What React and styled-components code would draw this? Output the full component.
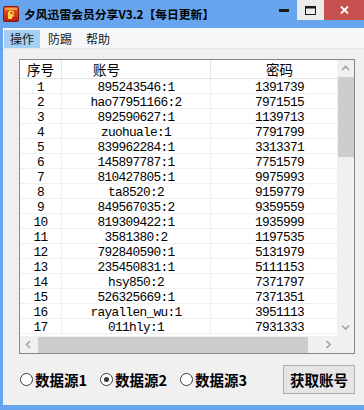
import React from "react";
import styled, { createGlobalStyle } from "styled-components";

const GlobalStyle = createGlobalStyle`
  html, body { margin: 0; padding: 0; background: #ffffff; }
  body { font-family: "Noto Sans CJK SC", "Noto Sans", sans-serif; }
  * { box-sizing: border-box; }
`;

const CJK = `"Noto Sans CJK SC", "Noto Sans", sans-serif`;
const MONO = `"Liberation Mono", "Noto Sans CJK SC", monospace`;

const Window = styled.div`
  width: 364px;
  height: 410px;
  background: #67a6ef;
  display: flex;
  flex-direction: column;
  overflow: hidden;
`;

const TitleBar = styled.div`
  height: 28px;
  flex-shrink: 0;
  display: flex;
  align-items: flex-start;
`;

const AppIcon = styled.svg`
  width: 16px;
  height: 16px;
  margin: 6px 0 0 3px;
  flex-shrink: 0;
`;

const TitleText = styled.div`
  flex: 1;
  margin: 5px 0 0 5px;
  font-family: ${CJK};
  font-weight: 700;
  font-size: 11.8px;
  line-height: 18px;
  color: #000;
  white-space: nowrap;
`;

const CaptionButton = styled.div`
  width: ${(p) => p.$w}px;
  height: 20px;
  background: ${(p) => p.$bg || "transparent"};
  display: flex;
  align-items: center;
  justify-content: center;
  flex-shrink: 0;
`;

const Body = styled.div`
  flex: 1;
  margin: 0 0 5px 3px;
  background: #f0f0f0;
  display: flex;
  flex-direction: column;
`;

const MenuBar = styled.div`
  height: 21px;
  flex-shrink: 0;
  background: #f5f6f7;
  border-bottom: 1px solid #e6e6e6;
  display: flex;
  align-items: flex-start;
  padding: 2px 0 0 1px;
  gap: 2px;
`;

const MenuItem = styled.div`
  width: 36px;
  height: 18px;
  font-family: ${CJK};
  font-size: 12px;
  line-height: 18px;
  text-align: center;
  color: #1a1a1a;
  background: ${(p) => (p.$active ? "#a6cff5" : "transparent")};
`;

const Content = styled.div`
  padding: 10px 9px 0 16px;
  flex-shrink: 0;
`;

const ListView = styled.div`
  width: 336px;
  height: 295px;
  border: 1px solid #828790;
  background: #ffffff;
  display: flex;
  flex-direction: column;
`;

const ListMain = styled.div`
  flex: 1;
  display: flex;
  min-height: 0;
`;

const Table = styled.div`
  flex: 1;
  overflow: hidden;
  min-width: 0;
`;

const HeaderRow = styled.div`
  display: flex;
  height: 19px;
  border-bottom: 1px solid #e5e5e5;
  width: max-content;
`;

const HeaderCell = styled.div`
  width: ${(p) => p.$w}px;
  flex-shrink: 0;
  border-right: 1px solid #e5e5e5;
  font-family: ${CJK};
  font-size: 13.5px;
  line-height: 18px;
  color: #000;
  text-align: ${(p) => (p.$indent ? "left" : "center")};
  padding-left: ${(p) => p.$indent || 0}px;
`;

const Row = styled.div`
  display: flex;
  height: 15px;
  border-bottom: 1px solid #f0f0f0;
  width: max-content;
`;

const Cell = styled.div`
  width: ${(p) => p.$w}px;
  flex-shrink: 0;
  border-right: 1px solid #f0f0f0;
  font-family: ${MONO};
  font-size: 12.8px;
  letter-spacing: -0.68px;
  line-height: 15px;
  padding-top: 1px;
  text-align: center;
  color: #000;
  white-space: nowrap;
`;

const VScroll = styled.div`
  width: 17px;
  flex-shrink: 0;
  background: #f0f0f0;
  display: flex;
  flex-direction: column;
`;

const ArrowBox = styled.div`
  width: 17px;
  height: 17px;
  flex-shrink: 0;
  display: flex;
  align-items: center;
  justify-content: center;
`;

const VThumb = styled.div`
  height: 80px;
  margin: 0 0 0 1px;
  background: #cdcdcd;
`;

const Spacer = styled.div`
  flex: 1;
`;

const HScroll = styled.div`
  height: 17px;
  flex-shrink: 0;
  background: #f0f0f0;
  display: flex;
`;

const HThumb = styled.div`
  width: 270px;
  margin: 1px 0 0 1px;
  background: #cdcdcd;
`;

const Corner = styled.div`
  width: 17px;
  flex-shrink: 0;
  background: #f0f0f0;
`;

const BottomBar = styled.div`
  flex: 1;
  display: flex;
  align-items: center;
  padding: 0 9px 0 17px;
`;

const RadioGroup = styled.div`
  display: flex;
`;

const RadioItem = styled.label`
  width: 80px;
  display: flex;
  align-items: center;
`;

const RadioCircle = styled.span`
  width: 13px;
  height: 13px;
  border-radius: 50%;
  border: 1px solid #3c3c3c;
  background: #ffffff;
  display: flex;
  align-items: center;
  justify-content: center;
  flex-shrink: 0;
  &::after {
    content: "";
    width: 5px;
    height: 5px;
    border-radius: 50%;
    background: ${(p) => (p.$checked ? "#333333" : "transparent")};
  }
`;

const RadioLabel = styled.span`
  margin-left: 2px;
  font-family: ${CJK};
  font-weight: 700;
  font-size: 14.5px;
  line-height: 18px;
  color: #000;
  white-space: nowrap;
`;

const Button = styled.button`
  margin-left: auto;
  width: 72px;
  height: 29px;
  border: 1px solid #adadad;
  background: #e5e5e5;
  font-family: ${CJK};
  font-weight: 700;
  font-size: 14.5px;
  color: #000;
  padding: 0;
  display: flex;
  align-items: center;
  justify-content: center;
`;

const Chevron = ({ dir }) => {
  const pts = {
    up: "1,5 4.5,1.5 8,5",
    down: "1,1.5 4.5,5 8,1.5",
    left: "5,1 1.5,4.5 5,8",
    right: "1.5,1 5,4.5 1.5,8",
  }[dir];
  const vertical = dir === "up" || dir === "down";
  return (
    <svg width={vertical ? 9 : 7} height={vertical ? 7 : 9} viewBox={vertical ? "0 0 9 7" : "0 0 7 9"}>
      <polyline points={pts} fill="none" stroke="#a3a3a3" strokeWidth="1.6" />
    </svg>
  );
};

const rows = [
  ["1", "895243546:1", "1391739"],
  ["2", "hao77951166:2", "7971515"],
  ["3", "892590627:1", "1139713"],
  ["4", "zuohuale:1", "7791799"],
  ["5", "839962284:1", "3313371"],
  ["6", "145897787:1", "7751579"],
  ["7", "810427805:1", "9975993"],
  ["8", "ta8520:2", "9159779"],
  ["9", "849567035:2", "9359559"],
  ["10", "819309422:1", "1935999"],
  ["11", "3581380:2", "1197535"],
  ["12", "792840590:1", "5131979"],
  ["13", "235450831:1", "5111153"],
  ["14", "hsy850:2", "7371797"],
  ["15", "526325669:1", "7371351"],
  ["16", "rayallen_wu:1", "3951113"],
  ["17", "011hly:1", "7931333"],
];

const COLS = [42, 149, 138];

export default function App() {
  return (
    <>
      <GlobalStyle />
      <Window>
        <TitleBar>
          <AppIcon viewBox="0 0 16 16">
            <defs>
              <linearGradient id="ig" x1="0" y1="0" x2="0" y2="1">
                <stop offset="0" stopColor="#f0602a" />
                <stop offset="1" stopColor="#b41c14" />
              </linearGradient>
            </defs>
            <rect x="0.5" y="0.5" width="15" height="15" rx="1.5" fill="url(#ig)" stroke="#8a1a10" />
            <rect x="2" y="2" width="12" height="2" fill="#f7a04a" />
            <path d="M5 13 L5 7 Q5 4.5 8 4.5 Q11 4.5 11 7 L10 9 L12 10 L9 11 L9 13 Z" fill="#ffd54a" />
            <circle cx="8.5" cy="7" r="1" fill="#b41c14" />
          </AppIcon>
          <TitleText>夕风迅雷会员分享V3.2【每日更新】</TitleText>
          <CaptionButton $w={26}>
            <svg width="10" height="3" viewBox="0 0 10 3">
              <rect x="0" y="0" width="10" height="3" fill="#1a1a1a" />
            </svg>
          </CaptionButton>
          <CaptionButton $w={27} $bg="#ececec">
            <svg width="11" height="9" viewBox="0 0 11 9">
              <rect x="0.5" y="0.5" width="10" height="8" fill="none" stroke="#1a1a1a" />
              <rect x="0" y="0" width="11" height="2.5" fill="#1a1a1a" />
            </svg>
          </CaptionButton>
          <CaptionButton $w={40} $bg="#c75050">
            <svg width="9" height="8" viewBox="0 0 9 8">
              <path d="M1 0.5 L8 7.5 M8 0.5 L1 7.5" stroke="#ffffff" strokeWidth="1.8" />
            </svg>
          </CaptionButton>
        </TitleBar>
        <Body>
          <MenuBar>
            <MenuItem $active>操作</MenuItem>
            <MenuItem>防踢</MenuItem>
            <MenuItem>帮助</MenuItem>
          </MenuBar>
          <Content>
            <ListView>
              <ListMain>
                <Table>
                  <HeaderRow>
                    <HeaderCell $w={COLS[0]}>序号</HeaderCell>
                    <HeaderCell $w={COLS[1]} $indent={31}>账号</HeaderCell>
                    <HeaderCell $w={COLS[2]}>密码</HeaderCell>
                  </HeaderRow>
                  {rows.map((r) => (
                    <Row key={r[0]}>
                      <Cell $w={COLS[0]}>{r[0]}</Cell>
                      <Cell $w={COLS[1]}>{r[1]}</Cell>
                      <Cell $w={COLS[2]}>{r[2]}</Cell>
                    </Row>
                  ))}
                </Table>
                <VScroll>
                  <ArrowBox><Chevron dir="up" /></ArrowBox>
                  <VThumb />
                  <Spacer />
                  <ArrowBox><Chevron dir="down" /></ArrowBox>
                </VScroll>
              </ListMain>
              <HScroll>
                <ArrowBox><Chevron dir="left" /></ArrowBox>
                <HThumb />
                <Spacer />
                <ArrowBox><Chevron dir="right" /></ArrowBox>
                <Corner />
              </HScroll>
            </ListView>
          </Content>
          <BottomBar>
            <RadioGroup>
              <RadioItem>
                <RadioCircle />
                <RadioLabel>数据源1</RadioLabel>
              </RadioItem>
              <RadioItem>
                <RadioCircle $checked />
                <RadioLabel>数据源2</RadioLabel>
              </RadioItem>
              <RadioItem>
                <RadioCircle />
                <RadioLabel>数据源3</RadioLabel>
              </RadioItem>
            </RadioGroup>
            <Button>获取账号</Button>
          </BottomBar>
        </Body>
      </Window>
    </>
  );
}
